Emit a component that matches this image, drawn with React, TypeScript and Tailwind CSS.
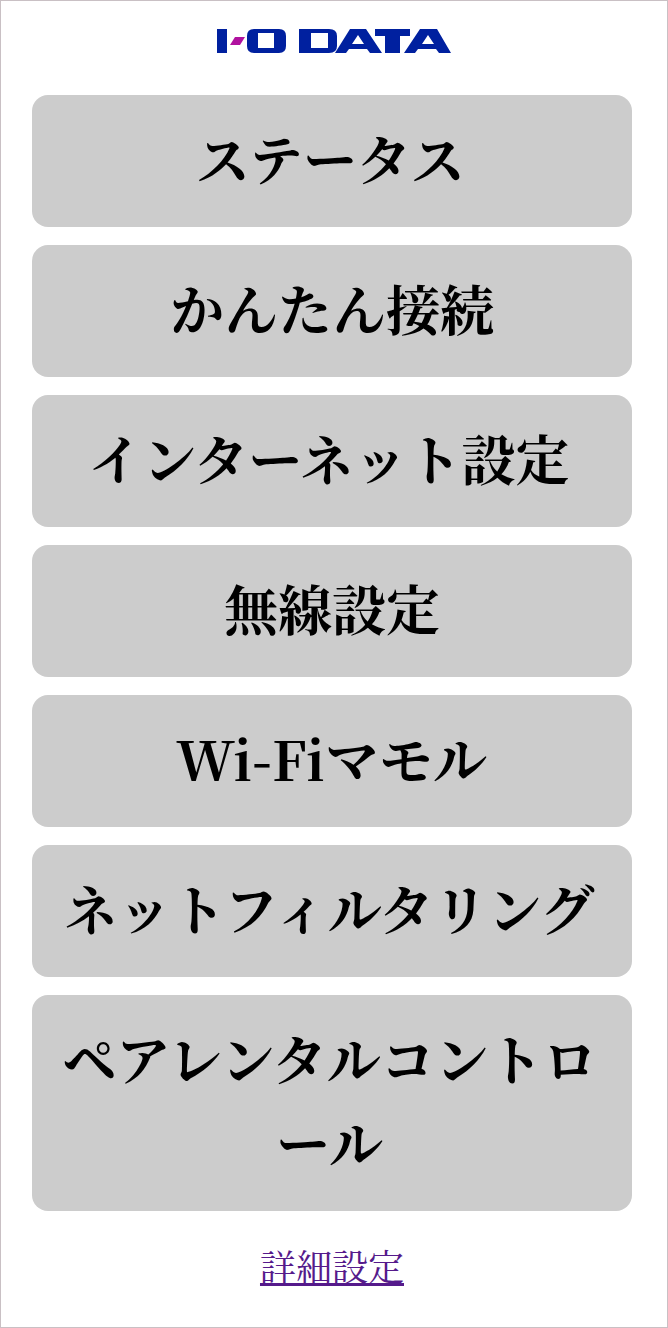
const items = [
  { t: "ステータス", pr: "pr-[27px]" },
  { t: "かんたん接続", pr: "pr-[24px]" },
  { t: "インターネット設定", pr: "pr-[30px]" },
  { t: "無線設定", pr: "pr-[24px]" },
  { t: "Wi-Fiマモル", pr: "pr-[25px]" },
  { t: "ネットフィルタリング", pr: "pr-[30px]" },
  { t: "ペアレンタルコントロール", pr: "pr-[29px]" },
];
const serif = "font-['Noto_Serif_CJK_JP','Liberation_Serif',serif]";

function Logo() {
  return (
    <svg width="236" height="26" viewBox="0 0 236 26" className="block blur-[0.6px]">
      <g fill="#00209f" fillRule="evenodd">
        <rect x="2" y="1" width="10" height="24" />
        <path d="M39 1H64Q71 1 71 8V18Q71 25 64 25H39Q32 25 32 18V8Q32 1 39 1ZM43 5V20H59V5Z" />
        <path d="M84 1H114Q122 1 122 8V18Q122 25 114 25H84ZM96 5V20H113V5Z" />
        <path d="M135 1H151L167 25H155L152 21H134L131 25H120ZM143 7L137 16H149Z" />
        <path d="M160 1H195V8H185V25H170V8H160Z" />
        <path d="M205 1H222L236 25H224L221 21H203L200 25H189ZM213 7L207 16H219Z" />
      </g>
      <path d="M20 9H30L25 17H15Z" fill="#b0119f" />
    </svg>
  );
}

export default function App() {
  return (
    <div className={`h-[1328px] w-[668px] border border-[#c9c0c4] bg-white ${serif}`}>
      <div className="flex h-[94px] justify-center pt-[27px] pr-[3px]">
        <Logo />
      </div>
      <div className="flex flex-col items-center gap-[18px] pr-[4px]">
        {items.map(({ t, pr }) => (
          <button key={t} className={`w-[600px] rounded-[16px] bg-[#cccccc] pl-[24px] ${pr} pt-[21px] pb-[27px] text-center text-[54px] leading-[84px] font-bold text-black`}>
            {t}
          </button>
        ))}
      </div>
      <div className="mt-[27px] pr-[4px] text-center text-[36px] leading-[56px]">
        <a href="#" className="text-[#551a8b] underline">詳細設定</a>
      </div>
    </div>
  );
}
